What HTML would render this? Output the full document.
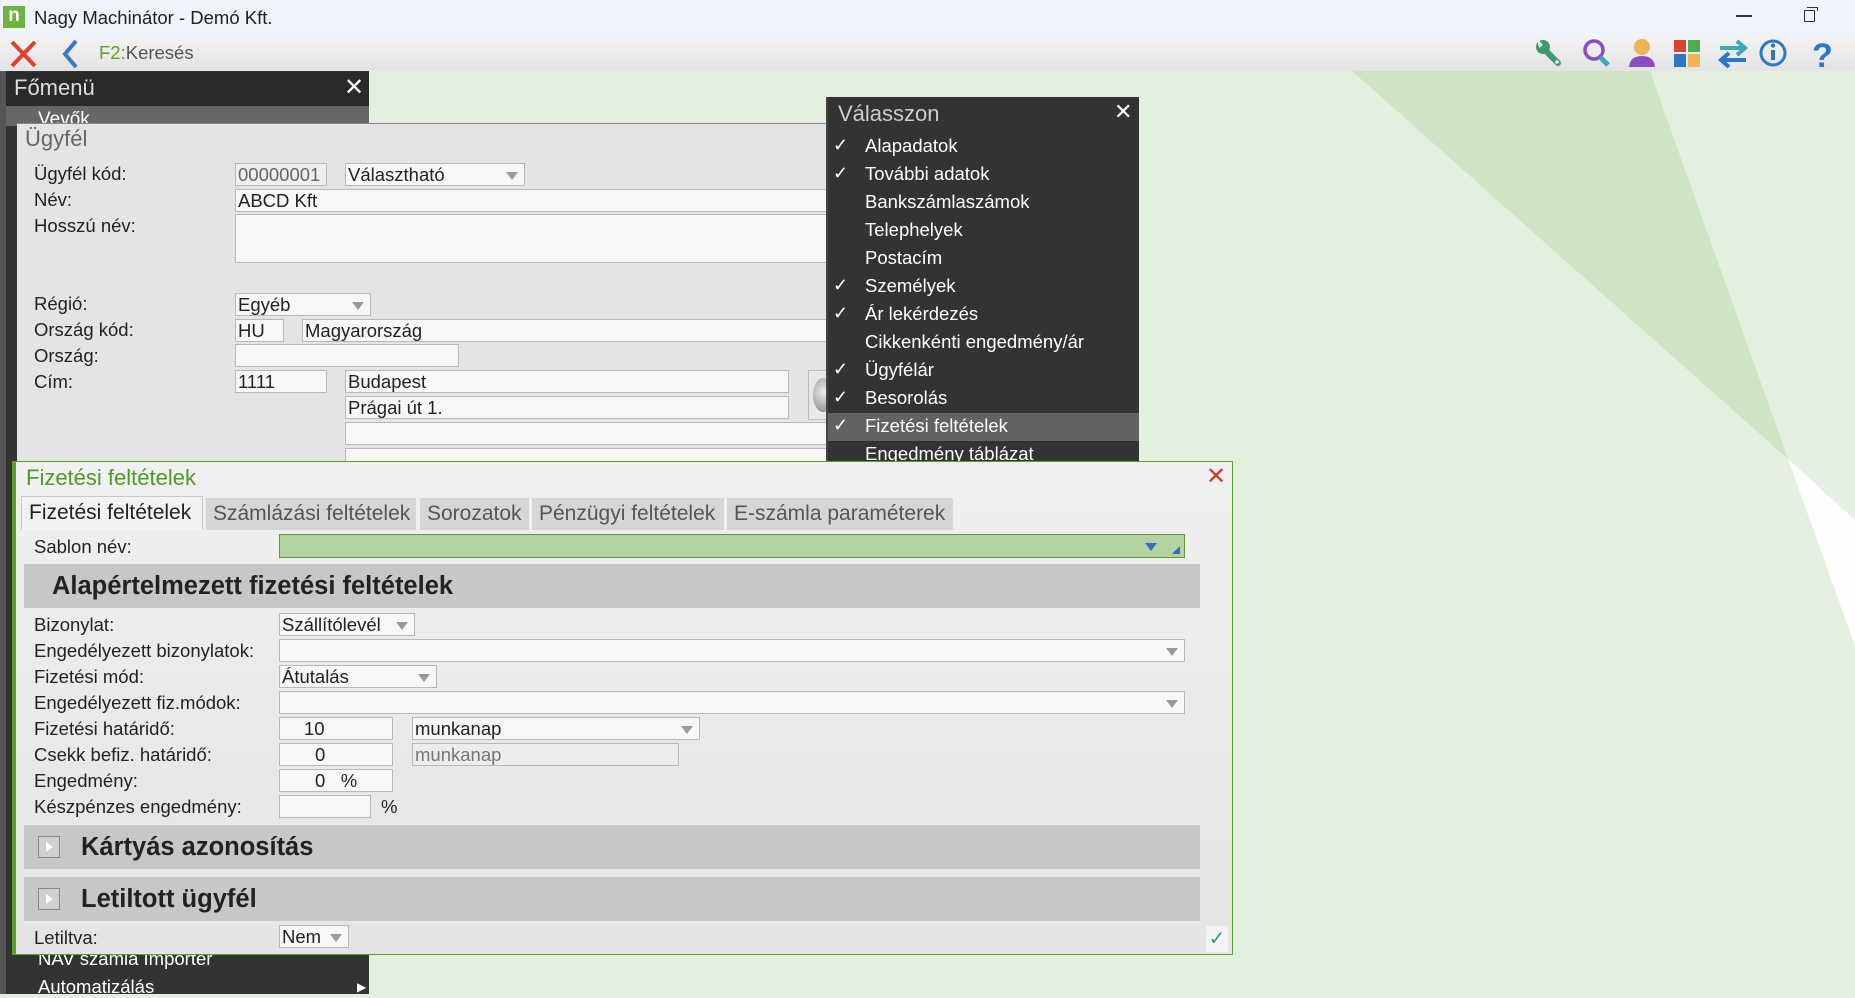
<!DOCTYPE html>
<html><head><meta charset="utf-8">
<style>
*{box-sizing:border-box;margin:0;padding:0}
body{width:1855px;height:994px;overflow:hidden;position:relative;font-family:"Liberation Sans",Arial,sans-serif;background:#e4f0df;color:#222}
.a{position:absolute}
.lbl{position:absolute;font-size:18.5px;color:#222;white-space:nowrap;line-height:20px}
.in{position:absolute;height:23px;background:#f7f7f7;border:1px solid #b8b8b8;font-size:18.5px;line-height:21px;padding-left:2px;white-space:nowrap;overflow:hidden}
.dd::after{content:"";position:absolute;right:6px;top:8px;border-left:6px solid transparent;border-right:6px solid transparent;border-top:8px solid #9a9a9a}
.mi{position:absolute;left:865px;font-size:18.5px;color:#fff;white-space:nowrap}
.ck{position:absolute;left:833px;font-size:18px;color:#fff}
.tab{position:absolute;top:498px;height:32px;background:#d6d6d6;font-size:21px;color:#555;line-height:32px;padding-left:7px;white-space:nowrap;overflow:hidden}
.sec{position:absolute;left:24px;width:1176px;background:#c7c7c7;font-weight:bold;font-size:25.5px;color:#222}
.tri{position:absolute;left:38px;width:22px;height:22px;border:1px solid #888;background:#d0d0d0}
.tri::after{content:"";position:absolute;left:7px;top:5px;border-top:5px solid transparent;border-bottom:5px solid transparent;border-left:7px solid #fff;}
</style></head><body>
<svg class="a" style="left:0;top:71px" width="1855" height="923"><polygon points="1352,0 1650,0 1788,388" fill="#cde5c2"/><polygon points="1788,388 1855,449 1855,575" fill="#fdfefd"/></svg>
<div class="a" style="left:0;top:0;width:1855px;height:35px;background:#eef4fa"></div>
<div class="a" style="left:3px;top:6px;width:22px;height:22px;background:#6cb33f;color:#fff;font-weight:bold;font-size:19px;line-height:20px;text-align:center">n</div>
<div class="a" style="left:34px;top:7px;font-size:18.5px;color:#222">Nagy Machinátor - Demó Kft.</div>
<div class="a" style="left:1736px;top:15px;width:16px;height:1.5px;background:#333"></div>
<div class="a" style="left:1804px;top:10px;width:11px;height:12px;border:1.5px solid #333;border-radius:1px"></div>
<div class="a" style="left:1807px;top:7px;width:11px;height:4px;border-top:1.5px solid #333;border-right:1.5px solid #333"></div>
<div class="a" style="left:0;top:35px;width:1855px;height:36px;background:linear-gradient(#f3f3f3,#e3e3e3)"></div>
<svg class="a" style="left:8px;top:38px" width="32" height="32"><path d="M4 4 L27 28 M27 4 L4 28" stroke="#e0402c" stroke-width="4"/></svg>
<svg class="a" style="left:58px;top:38px" width="24" height="32"><path d="M18 3 L7 16 L18 29" stroke="#3a78c2" stroke-width="4" fill="none"/></svg>
<div class="a" style="left:99px;top:42px;font-size:18.5px;color:#555"><span style="color:#5aa02c">F2:</span>Keresés</div>
<svg class="a" style="left:1533px;top:36px" width="300" height="34">
<path d="M11 13 L25 27" stroke="#3c9a6c" stroke-width="6" stroke-linecap="round"/><circle cx="10" cy="11" r="7" fill="#3c9a6c"/><path d="M4 2 L10 9 L6 12 Z" fill="#eaeaea"/><circle cx="24" cy="26" r="1.8" fill="#eee"/>
<circle cx="61" cy="14" r="9" stroke="#8a4cc0" stroke-width="3.5" fill="none"/><path d="M67 21 L75 29" stroke="#34aabb" stroke-width="5"/>
<circle cx="109" cy="11" r="8" fill="#f0b455"/><path d="M96 31 Q97 20 109 20 Q121 20 122 31Z" fill="#8a4cc0"/>
<rect x="141" y="4" width="12" height="12" fill="#d9432f"/><rect x="155" y="4" width="12" height="12" fill="#4cae50"/><rect x="141" y="18" width="12" height="13" fill="#2d78c3"/><rect x="155" y="18" width="12" height="13" fill="#f0b455"/>
<path d="M187 12 L210 12 M204 5 L212 12 L204 19" stroke="#34aabb" stroke-width="4" fill="none"/><path d="M213 24 L190 24 M196 17 L188 24 L196 31" stroke="#2d78c3" stroke-width="4" fill="none"/>
<circle cx="240" cy="17" r="12" stroke="#2d78c3" stroke-width="3" fill="none"/><rect x="238" y="14" width="4" height="10" fill="#2d78c3"/><circle cx="240" cy="9.5" r="2.2" fill="#2d78c3"/>
<text x="279" y="31" font-family="Liberation Sans" font-weight="bold" font-size="34" fill="#2d78c3">?</text>
</svg>
<div class="a" style="left:0;top:71px;width:6px;height:923px;background:#555"></div>
<div class="a" style="left:6px;top:71px;width:363px;height:923px;background:#333"></div>
<div class="a" style="left:6px;top:72px;width:363px;height:34px;background:#2a2a2a"></div>
<div class="a" style="left:14px;top:75px;font-size:22px;color:#ddd">Főmenü</div>
<div class="a" style="left:344px;top:73px;font-size:24px;color:#fff">✕</div>
<div class="a" style="left:6px;top:106px;width:363px;height:20px;background:#666"></div>
<div class="a" style="left:38px;top:109px;font-size:19px;color:#fff">Vevők</div>
<div class="a" style="left:38px;top:948px;font-size:18.5px;color:#fff">NAV számla Importer</div>
<div class="a" style="left:38px;top:976px;font-size:18.5px;color:#fff">Automatizálás</div>
<div class="a" style="left:357px;top:980px;font-size:12px;color:#fff">▶</div>
<div class="a" style="left:17px;top:123px;width:811px;height:340px;background:#e4e4e4;border-top:1px solid #888"></div>
<div class="a" style="left:25px;top:126px;font-size:22px;color:#666">Ügyfél</div>
<div class="lbl" style="left:34px;top:164px">Ügyfél kód:</div>
<div class="in" style="left:235px;top:163px;width:92px;color:#666;background:#efefef">00000001</div>
<div class="in dd" style="left:345px;top:163px;width:180px">Választható</div>
<div class="lbl" style="left:34px;top:190px">Név:</div>
<div class="in" style="left:235px;top:189px;width:600px">ABCD Kft</div>
<div class="lbl" style="left:34px;top:216px">Hosszú név:</div>
<div class="in" style="left:235px;top:214px;width:600px;height:49px"></div>
<div class="lbl" style="left:34px;top:294px">Régió:</div>
<div class="in dd" style="left:235px;top:293px;width:136px">Egyéb</div>
<div class="lbl" style="left:34px;top:320px">Ország kód:</div>
<div class="in" style="left:235px;top:319px;width:49px">HU</div>
<div class="in" style="left:302px;top:319px;width:530px">Magyarország</div>
<div class="lbl" style="left:34px;top:346px">Ország:</div>
<div class="in" style="left:235px;top:344px;width:224px"></div>
<div class="lbl" style="left:34px;top:372px">Cím:</div>
<div class="in" style="left:235px;top:370px;width:92px">1111</div>
<div class="in" style="left:345px;top:370px;width:444px">Budapest</div>
<div class="in" style="left:345px;top:396px;width:444px">Prágai út 1.</div>
<div class="in" style="left:345px;top:422px;width:490px"></div>
<div class="in" style="left:345px;top:448px;width:490px"></div>
<div class="a" style="left:808px;top:370px;width:20px;height:50px;background:#e8e8e8;border:1px solid #bbb"></div>
<div class="a" style="left:813px;top:378px;width:20px;height:34px;border-radius:50%;background:radial-gradient(circle at 60% 40%,#eee,#888)"></div>
<div class="a" style="left:826px;top:97px;width:313px;height:364px;background:#333;border-left:2px solid #444"></div>
<div class="a" style="left:838px;top:101px;font-size:22px;color:#ccc">Válasszon</div>
<div class="a" style="left:1114px;top:99px;font-size:22px;color:#fff">✕</div>
<div class="a" style="left:828px;top:413px;width:311px;height:28px;background:#626262"></div>
<div class="ck" style="top:135px">✓</div><div class="mi" style="top:135px">Alapadatok</div>
<div class="ck" style="top:163px">✓</div><div class="mi" style="top:163px">További adatok</div>
<div class="mi" style="top:191px">Bankszámlaszámok</div>
<div class="mi" style="top:219px">Telephelyek</div>
<div class="mi" style="top:247px">Postacím</div>
<div class="ck" style="top:275px">✓</div><div class="mi" style="top:275px">Személyek</div>
<div class="ck" style="top:303px">✓</div><div class="mi" style="top:303px">Ár lekérdezés</div>
<div class="mi" style="top:331px">Cikkenkénti engedmény/ár</div>
<div class="ck" style="top:359px">✓</div><div class="mi" style="top:359px">Ügyfélár</div>
<div class="ck" style="top:387px">✓</div><div class="mi" style="top:387px">Besorolás</div>
<div class="ck" style="top:415px">✓</div><div class="mi" style="top:415px">Fizetési feltételek</div>
<div class="mi" style="top:443px">Engedmény táblázat</div>
<div class="a" style="left:12px;top:461px;width:1221px;height:494px;background:linear-gradient(#f0f0f0,#e4e4e4);border:1px solid #5aa02c;border-left:4px solid #5aa02c"></div>
<div class="a" style="left:26px;top:465px;font-size:22px;color:#4f9a2a">Fizetési feltételek</div>
<div class="a" style="left:1206px;top:462px;font-size:24px;color:#d03a2a">✕</div>
<div class="tab" style="left:21px;width:182px;top:496px;height:34px;background:#f2f2f2;border:1px solid #c8c8c8;border-bottom:none;color:#222">Fizetési feltételek</div>
<div class="tab" style="left:206px;width:210px">Számlázási feltételek</div>
<div class="tab" style="left:420px;width:109px">Sorozatok</div>
<div class="tab" style="left:532px;width:192px">Pénzügyi feltételek</div>
<div class="tab" style="left:727px;width:226px">E-számla paraméterek</div>
<div class="lbl" style="left:34px;top:537px">Sablon név:</div>
<div class="a" style="left:279px;top:534px;width:906px;height:24px;background:#b3d3a0;border:1.5px solid #5a9a3a"></div>
<div class="a" style="left:1145px;top:543px;border-left:6px solid transparent;border-right:6px solid transparent;border-top:8px solid #2d6fc0"></div>
<div class="a" style="left:1172px;top:546px;border-left:8px solid transparent;border-bottom:8px solid #2d6fc0"></div>
<div class="sec" style="top:564px;height:44px;line-height:44px;padding-left:28px">Alapértelmezett fizetési feltételek</div>
<div class="lbl" style="left:34px;top:615px">Bizonylat:</div><div class="in dd" style="left:279px;top:613px;width:136px">Szállítólevél</div>
<div class="lbl" style="left:34px;top:641px">Engedélyezett bizonylatok:</div><div class="in dd" style="left:279px;top:639px;width:906px"></div>
<div class="lbl" style="left:34px;top:667px">Fizetési mód:</div><div class="in dd" style="left:279px;top:665px;width:158px">Átutalás</div>
<div class="lbl" style="left:34px;top:693px">Engedélyezett fiz.módok:</div><div class="in dd" style="left:279px;top:691px;width:906px"></div>
<div class="lbl" style="left:34px;top:719px">Fizetési határidő:</div><div class="in" style="left:279px;top:717px;width:114px;padding-left:24px">10</div><div class="in dd" style="left:412px;top:717px;width:288px">munkanap</div>
<div class="lbl" style="left:34px;top:745px">Csekk befiz. határidő:</div><div class="in" style="left:279px;top:743px;width:114px;padding-left:35px">0</div><div class="in" style="left:412px;top:743px;width:267px;background:#ececec;color:#777">munkanap</div>
<div class="lbl" style="left:34px;top:771px">Engedmény:</div><div class="in" style="left:279px;top:769px;width:114px;padding-left:35px">0&nbsp;&nbsp;&nbsp;%</div>
<div class="lbl" style="left:34px;top:797px">Készpénzes engedmény:</div><div class="in" style="left:279px;top:795px;width:92px"></div><div class="lbl" style="left:381px;top:797px">%</div>
<div class="sec" style="top:825px;height:44px;line-height:44px;padding-left:57px">Kártyás azonosítás</div><div class="tri" style="top:836px"></div>
<div class="sec" style="top:877px;height:44px;line-height:44px;padding-left:57px">Letiltott ügyfél</div><div class="tri" style="top:888px"></div>
<div class="lbl" style="left:34px;top:928px">Letiltva:</div><div class="in dd" style="left:279px;top:925px;width:70px">Nem</div>
<div class="a" style="left:1206px;top:926px;width:22px;height:26px;background:#f3f3f3;color:#3a9a7a;font-size:20px;text-align:center">✓</div>
</body></html>
